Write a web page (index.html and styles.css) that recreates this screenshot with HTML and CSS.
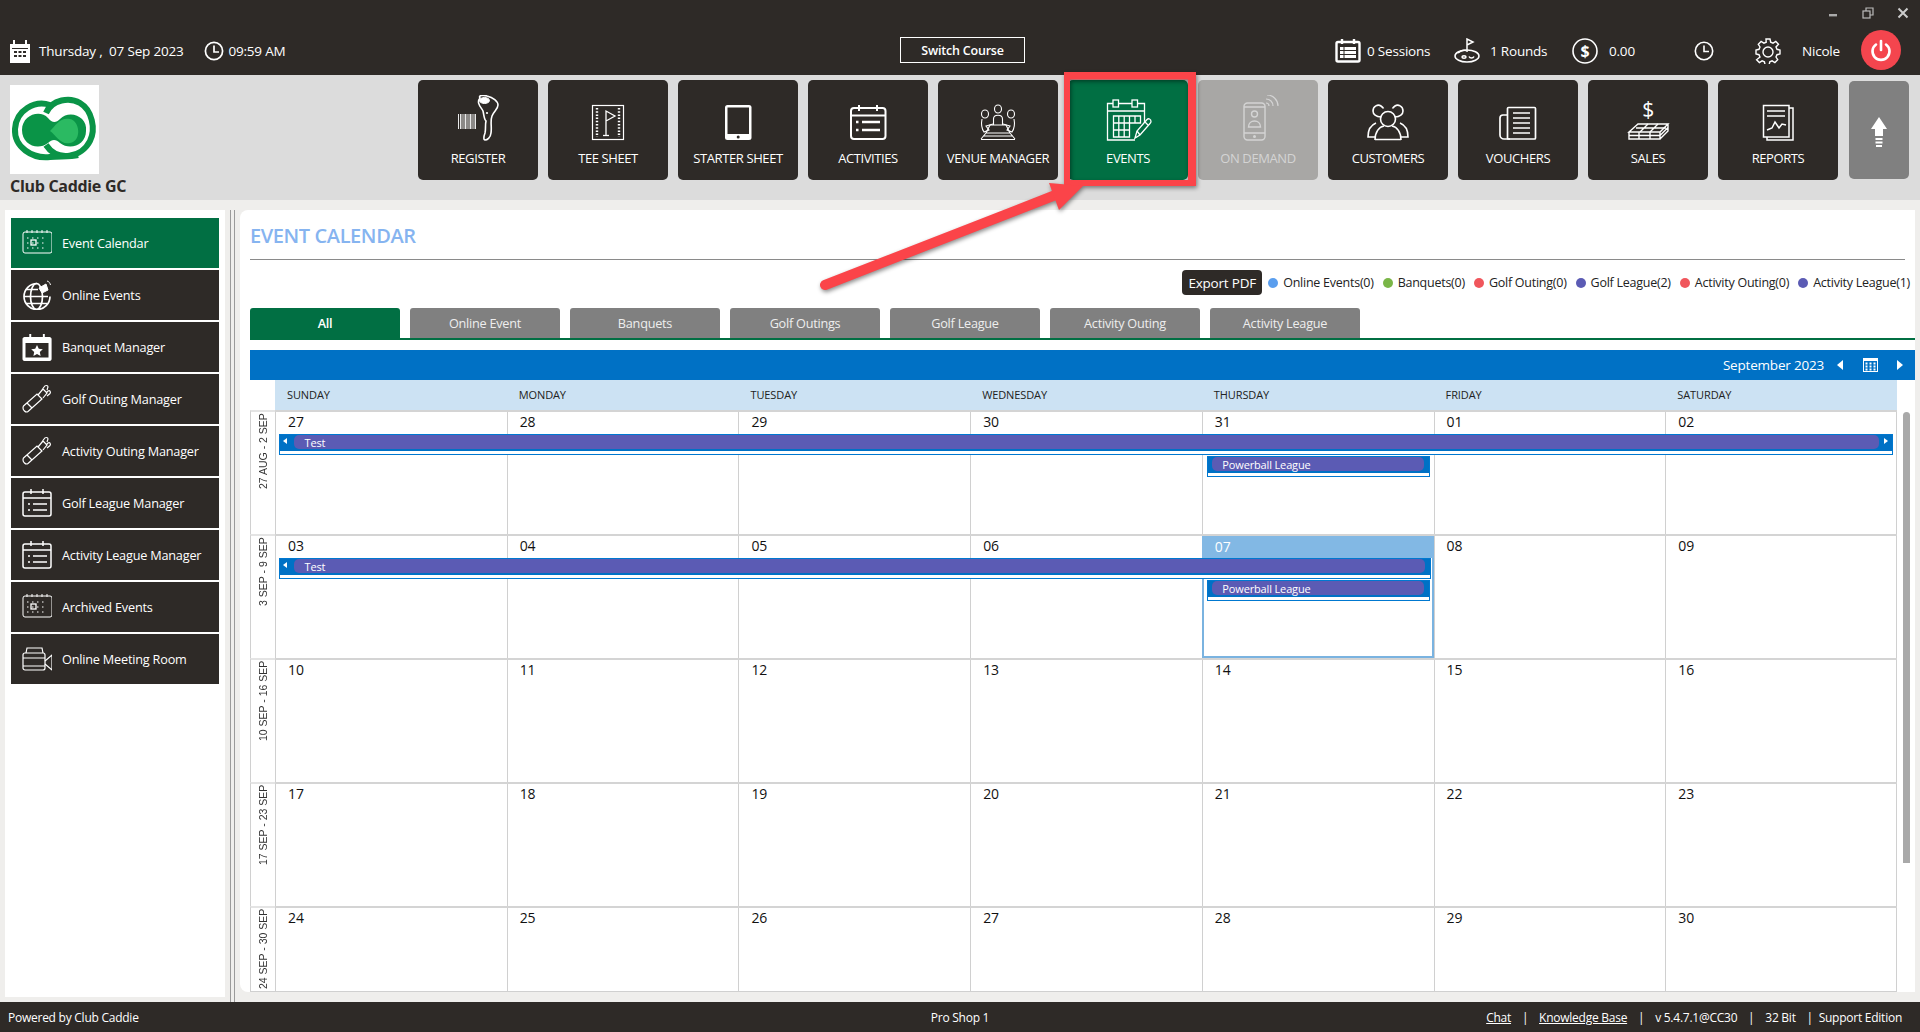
FILE: index.html
```html
<!DOCTYPE html>
<html lang="en">
<head>
  <meta charset="UTF-8">
  <title>Event Calendar</title>
  <link rel="stylesheet" href="styles.css">
</head>
<body>
<header class="topbar">
  <div class="winControls">
    <svg width="12" height="12" viewBox="0 0 12 12"><rect x="2" y="7" width="8" height="2.4" fill="#aaa"/></svg>
    <svg width="12" height="12" viewBox="0 0 12 12" fill="none" stroke="#bbb" stroke-width="1.2"><rect x="1" y="4" width="7" height="7"/><path d="M4 4V1h7v7H8"/></svg>
    <svg width="12" height="12" viewBox="0 0 12 12" stroke="#ccc" stroke-width="2"><path d="M1.5 1.5l9 9M10.5 1.5l-9 9"/></svg>
  </div>
  <div class="infoRow">
    <div class="infoLeft">
      <svg class="dateIcon" width="20" height="24" viewBox="0 0 20 24">
        <path d="M0 5h3V1h2v4h10V1h2v4h3v19H0z" fill="#fff"/>
        <path d="M3 1h2v6H3zM15 1h2v6h-2z" fill="#fff"/>
        <rect x="2" y="9" width="16" height="1" fill="#2e2a27"/>
        <path d="M4 12h3v2H4zM8.500 12h3v2h-3zM13 12h3v2h-3zM4 16h3v2H4zM8.500 16h3v2h-3zM13 16h3v2h-3z" fill="#2e2a27"/>
      </svg>
      <span class="dateText">Thursday ,&nbsp; 07 Sep 2023</span>
      <svg class="clockIcon" width="20" height="20" viewBox="0 0 20 20" fill="none" stroke="#fff" stroke-width="1.7"><circle cx="10" cy="10" r="8.600"/><path d="M10 4.500V11h5"/></svg>
      <span>09:59 AM</span>
    </div>
    <button class="switchBtn">Switch Course</button>
    <div class="infoRight">
      <svg width="26" height="24" viewBox="0 0 26 24" fill="none" stroke="#fff" stroke-width="2.400"><rect x="1.500" y="3" width="23" height="19.500" rx="1.500"/><path d="M7 0v5M19 0v5"/><path d="M5 9.500h16M5 13.500h16M5 17.500h16" stroke-width="2.800"/><path d="M9 8v11" stroke="#2e2a27" stroke-width="1"/></svg>
      <span class="statText sessions">0 Sessions</span>
      <svg width="26" height="25" viewBox="0 0 26 25" fill="none" stroke="#fff" stroke-width="1.500"><path d="M13 14V1l6 3-6 3"/><ellipse cx="13" cy="18" rx="12" ry="6"/><ellipse cx="10" cy="19" rx="2" ry="1.200"/><path d="M15 18.500c1 2 4 2 5 0"/><path d="M4 15c3-3 6-3 8-2.500" /></svg>
      <span class="statText rounds">1 Rounds</span>
      <svg width="26" height="26" viewBox="0 0 26 26" fill="none" stroke="#fff" stroke-width="1.600"><circle cx="13" cy="13" r="12"/><text x="13" y="18.500" text-anchor="middle" class="dollarGlyph">$</text></svg>
      <span class="statText amount">0.00</span>
      <svg class="histIcon" width="20" height="20" viewBox="0 0 20 20" fill="none" stroke="#fff" stroke-width="1.600"><circle cx="10" cy="10" r="8.700"/><path d="M10 4.500V10.500h5"/></svg>
      <svg class="gearIcon" width="26" height="26" viewBox="0 0 26 26" fill="none" stroke="#fff" stroke-width="1.400"><path d="M11 1h4l.7 3.200 2.300 1 2.800-1.700 2.700 2.800L21 9l1 2.300 3 .7v4l-3 .7-1 2.300 1.700 2.700-2.800 2.800-2.800-1.700-2.300 1-.7 3h-4l-.7-3-2.300-1-2.700 1.700-2.800-2.800L5 19l-1-2.300-3-.7v-4l3-.7L5 9 3.300 6.300l2.800-2.800L8.900 5.200l2.300-1z"/><circle cx="13" cy="14" r="5"/></svg>
      <span class="userName">Nicole</span>
      <div class="powerBtn">
        <svg width="24" height="24" viewBox="0 0 24 24" fill="none" stroke="#fff" stroke-width="2.600" stroke-linecap="round"><path d="M12 3v9"/><path d="M7 6.500a8.500 8.500 0 1 0 10 0"/></svg>
      </div>
    </div>
  </div>
</header>

<section class="toolbar">
  <div class="brand">
    <div class="brandLogo">
      <svg width="89" height="89" viewBox="0 0 89 89" fill="none">
        <path d="M36 28C42 14 60 12 70 18c12 7 16 26 10 38-8 16-32 22-44 4" stroke="#0a9447" stroke-width="6"/>
        <path d="M40 20C25 15 6 25 5 44c-1 18 17 30 35 28 10-1 20 0 28-2" stroke="#0a9447" stroke-width="6"/>
        <path d="M12 45c0-15 18-21 26-12 4 5 8 5 12 1 10-10 28-2 26 12 0 14-16 20-26 12-4-4-8-4-12 0-10 8-26 2-26-13z" fill="#0a9447"/>
        <path d="M40 46c6-6 10-14 20-12 10 2 12 22 0 24-10 2-14-8-20-12z" fill="#2bba62"/>
      </svg>
    </div>
    <div class="brandName">Club Caddie GC</div>
  </div>
  <nav class="tiles">
    <a class="tile">
      <svg class="tileIcon" viewBox="0 0 48 46" fill="none" stroke="#fff">
        <path d="M4.500 19v15M6.500 19v15M8 19v15M10 19v15M11.500 19v15M13 19v15M15 19v15M16.500 19v15M18 19v15M20 19v15M21.500 19v15" stroke-width=".9"/>
        <path d="M26 3c-2-3 4-3 7-2 6 1.500 11 5 11 9s-4 6-6 11c-2 5 0 11-1 17-.5 5-4 7-6 7-1.500 0-1.500-3 0-7 1-4 0-8 1-12-2-2-2-6-3-10-2-4-7-8-3-13z" stroke-width="1.600"/>
        <ellipse cx="30.500" cy="5.500" rx="5" ry="3" fill="#fff"/>
        <circle cx="33" cy="18" r="1.100" fill="#fff" stroke="none"/>
      </svg>
      <span>REGISTER</span>
    </a>
    <a class="tile">
      <svg class="tileIcon" viewBox="0 0 48 46" fill="none" stroke="#fff">
        <rect x="8.500" y="10.500" width="31" height="34" stroke-width="1.200"/>
        <path d="M13 13v29M35 13v29" stroke-width="2.400" stroke-dasharray="1.500 1.700"/>
        <path d="M22 40V16l9 5-9 5" stroke-width="1.300"/>
        <path d="M19 40.500h6" stroke-width="1.300"/>
      </svg>
      <span>TEE SHEET</span>
    </a>
    <a class="tile">
      <svg class="tileIcon" viewBox="0 0 48 46">
        <rect x="11" y="10" width="26.500" height="35" rx="2.500" fill="#fff"/>
        <rect x="13.500" y="12.500" width="21.500" height="26.500" fill="#2e2a27"/>
        <circle cx="24.200" cy="42" r="1.500" fill="#2e2a27"/>
      </svg>
      <span>STARTER SHEET</span>
    </a>
    <a class="tile">
      <svg class="tileIcon" viewBox="0 0 48 46" fill="none" stroke="#fff" stroke-width="2">
        <rect x="7" y="13" width="34.500" height="31" rx="3"/>
        <path d="M7 20.500h34.500M15 10v6M33 10v6"/>
        <path d="M12 27h2.500M18 27h18M12 35h2.500M18 35h18" stroke-width="2.400"/>
      </svg>
      <span>ACTIVITIES</span>
    </a>
    <a class="tile">
      <svg class="tileIcon" viewBox="0 0 48 46" fill="none" stroke="#fff" stroke-width="1.100">
        <ellipse cx="24" cy="14" rx="3.500" ry="4"/>
        <ellipse cx="11" cy="19" rx="3.500" ry="4"/>
        <ellipse cx="37" cy="19" rx="3.500" ry="4"/>
        <path d="M19.500 30v-6c0-5 9-5 9 0v6"/>
        <path d="M8 24c-1 5 0 10 2 13l5-2-3-4 7-2M40 24c1 5 0 10-2 13l-5-2 3-4-7-2"/>
        <path d="M16 30h16l4 8H12zM7 44l5-6M41 44l-5-6M7 44.500h34M9 41h30"/>
      </svg>
      <span>VENUE MANAGER</span>
    </a>
    <a class="tile active">
      <svg class="tileIcon" viewBox="0 0 48 46" fill="none" stroke="#fff" stroke-width="1.300">
        <path d="M31 45H3.500V8.500h37V28"/>
        <path d="M3.500 16h37"/>
        <rect x="9" y="5" width="5.500" height="7" fill="#016f43"/>
        <rect x="28" y="5" width="5.500" height="7" fill="#016f43"/>
        <path d="M9.500 21h27v7h-27zM9.500 28h16v14h-16zM9.500 35h16M14.800 21v21M20.200 21v21M25.500 21v7M31 21v7"/>
        <path d="M31 43l2-7 10-11.500c1.500-1.500 4-.5 4 2 0 1-.5 1.500-1 2L36 40z" fill="#016f43"/>
        <path d="M33 36l3 4M41 27l3 3"/>
      </svg>
      <span>EVENTS</span>
    </a>
    <a class="tile muted">
      <svg class="tileIcon" viewBox="0 0 48 46" fill="none" stroke="#d4d4d4" stroke-width="1.400">
        <rect x="10" y="8" width="21" height="37" rx="3.500"/>
        <path d="M10 38h21M10 12h21"/>
        <circle cx="20.500" cy="19" r="3"/>
        <path d="M14.500 32c0-8 12-8 12 0z"/>
        <circle cx="20.500" cy="41.500" r=".8"/>
        <path d="M32 4c4 0 7 3 7 7M33 0c6 0 11 5 11 11M32 8c2 0 3 1 3 3" stroke-width="1.200"/>
      </svg>
      <span>ON DEMAND</span>
    </a>
    <a class="tile">
      <svg class="tileIcon" viewBox="0 0 48 46" fill="none" stroke="#fff" stroke-width="1.600">
        <circle cx="24" cy="24" r="7.500"/>
        <path d="M17 22c-5 0-8-3-8-6 0-5 5-7 8-5 1 .7 2 1.500 2.500 2.500M31 22c5 0 8-3 8-6 0-5-5-7-8-5-1 .7-2 1.500-2.500 2.500"/>
        <path d="M11 45c0-8 4-13 9-14M37 45c0-8-4-13-9-14M11 44.500h26"/>
        <path d="M11 42H4c0-7 3-12 8-14M37 42h7c0-7-3-12-8-14"/>
      </svg>
      <span>CUSTOMERS</span>
    </a>
    <a class="tile">
      <svg class="tileIcon" viewBox="0 0 48 46" fill="none" stroke="#fff" stroke-width="1.700">
        <rect x="13.500" y="12.500" width="28" height="31.500" rx="1"/>
        <path d="M13.500 20H9c-2 0-3 1.500-3 3v17c0 2.500 2 4 4 4h6"/>
        <path d="M19 18h17M19 23h17M19 28h17M19 33h17M19 38h17" stroke-width="1.500"/>
      </svg>
      <span>VOUCHERS</span>
    </a>
    <a class="tile">
      <svg class="tileIcon" viewBox="0 0 48 46" fill="none" stroke="#fff" stroke-width="1.400">
        <text x="24" y="22" text-anchor="middle" class="salesGlyph">$</text>
        <path d="M14 29h30l-8 8H5zM5 37v7h31v-7M44 29v7l-8 8M5 40.500h31M44 32.500l-8 8"/>
        <path d="M24 29l-8 8M34 29l-8 8M15 37v7M26 37v7M12 33h30"/>
      </svg>
      <span>SALES</span>
    </a>
    <a class="tile">
      <svg class="tileIcon" viewBox="0 0 48 46" fill="none" stroke="#fff" stroke-width="1.500">
        <path d="M35 13h4v32H13v-3"/>
        <rect x="9.500" y="10.500" width="25.500" height="31.500"/>
        <path d="M13 16h18M13 21h18" stroke-width="1.500"/>
        <path d="M13 35l5-2 3-6 4 6 3-4 4 1"/>
      </svg>
      <span>REPORTS</span>
    </a>
    <a class="tile upTile">
      <svg width="18" height="32" viewBox="0 0 18 32" fill="#fff">
        <path d="M9 0l8 12h-4v7H5v-7H1z"/>
        <path d="M5.500 21h7v2h-7zM5.500 24.500h7v2h-7zM6 28h6v2H6z"/>
      </svg>
    </a>
  </nav>
</section>

<div class="workspace">
  <aside class="sidebar">
    <a class="sideItem active">
      <svg viewBox="0 0 30 30" fill="none" stroke="#fff"><rect x="1" y="4" width="29" height="21" rx="2" stroke-width="1"/><path d="M5 2v3M10 2v3M15 2v3M20 2v3M25 2v3" stroke-width="1"/><path d="M5 10h20M5 15h20M5 20h20" stroke-dasharray="1.500 3.500"/><rect x="9" y="12" width="5" height="5" stroke-width="1.300"/></svg>
      <span>Event Calendar</span>
    </a>
    <a class="sideItem">
      <svg viewBox="0 0 30 30" fill="none" stroke="#fff" stroke-width="1.700"><path d="M15 3.500a13 13 0 1 0 13 13"/><ellipse cx="14.500" cy="16.500" rx="6" ry="13"/><path d="M2 16.500h24M4 9.500h12M4 23.500h21"/><path d="M17 8l7-4 2 6-6 3z" fill="#fff" stroke-width="1"/><path d="M25 1c2 .5 3 2 3.500 4" stroke-width="1"/></svg>
      <span>Online Events</span>
    </a>
    <a class="sideItem">
      <svg viewBox="0 0 30 30"><path d="M2 5h5V2h2v3h12V2h2v3h5c1 0 2 1 2 2v20c0 1-1 2-2 2H2c-1 0-2-1-2-2V7c0-1 1-2 2-2z" fill="#fff" transform="translate(.5 0) scale(.97 1)"/><rect x="3.500" y="11" width="23" height="14.500" fill="#2e2a27"/><path d="M15 13l1.800 3.700 4 .5-3 2.700.8 4-3.600-2-3.600 2 .8-4-3-2.700 4-.5z" fill="#fff"/></svg>
      <span>Banquet Manager</span>
    </a>
    <a class="sideItem">
      <svg viewBox="0 0 30 30" fill="none" stroke="#fff" stroke-width="1.200"><path d="M1.500 22L15 10l5 5L6 27.500c-1.500 1-2.500.5-3.500-.5s-2-3-1-5z"/><path d="M5 19l5 5"/><path d="M16 11l5-6 4 4-4 5M20 6l2-3c1-2 4-2 4 0l-1 3M24 9l2-2c2-1 3 1 2 2.500L25 12"/></svg>
      <span>Golf Outing Manager</span>
    </a>
    <a class="sideItem">
      <svg viewBox="0 0 30 30" fill="none" stroke="#fff" stroke-width="1.200"><path d="M1.500 22L15 10l5 5L6 27.500c-1.500 1-2.500.5-3.500-.5s-2-3-1-5z"/><path d="M5 19l5 5"/><path d="M16 11l5-6 4 4-4 5M20 6l2-3c1-2 4-2 4 0l-1 3M24 9l2-2c2-1 3 1 2 2.500L25 12"/></svg>
      <span>Activity Outing Manager</span>
    </a>
    <a class="sideItem">
      <svg viewBox="0 0 30 30" fill="none" stroke="#fff" stroke-width="1.500"><rect x="1" y="4" width="28" height="24" rx="2"/><path d="M1 10h28M9 1v5M21 1v5"/><path d="M6 16h2M11 16h14M6 22h2M11 22h14" stroke-width="1.700"/></svg>
      <span>Golf League Manager</span>
    </a>
    <a class="sideItem">
      <svg viewBox="0 0 30 30" fill="none" stroke="#fff" stroke-width="1.500"><rect x="1" y="4" width="28" height="24" rx="2"/><path d="M1 10h28M9 1v5M21 1v5"/><path d="M6 16h2M11 16h14M6 22h2M11 22h14" stroke-width="1.700"/></svg>
      <span>Activity League Manager</span>
    </a>
    <a class="sideItem">
      <svg viewBox="0 0 30 30" fill="none" stroke="#fff"><rect x="1" y="4" width="29" height="21" rx="2" stroke-width="1"/><path d="M5 2v3M10 2v3M15 2v3M20 2v3M25 2v3" stroke-width="1"/><path d="M5 10h20M5 15h20M5 20h20" stroke-dasharray="1.500 3.500"/><rect x="9" y="12" width="5" height="5" stroke-width="1.300"/></svg>
      <span>Archived Events</span>
    </a>
    <a class="sideItem">
      <svg viewBox="0 0 30 30" fill="none" stroke="#fff" stroke-width="1.200"><rect x="1" y="9" width="22" height="17" rx="2"/><path d="M4 9l1-5h15l1 5M1 14h22M1 22h22"/><path d="M23 17l7-6v15l-7-6"/></svg>
      <span>Online Meeting Room</span>
    </a>
  </aside>
  <div class="splitter"></div>
  <main class="panel">
    <h2 class="panelTitle">EVENT CALENDAR</h2>
    <div class="legendRow">
      <button class="exportBtn">Export PDF</button>
      <span class="legend"><i class="dot blue"></i>Online Events(0)</span>
      <span class="legend"><i class="dot green"></i>Banquets(0)</span>
      <span class="legend"><i class="dot red"></i>Golf Outing(0)</span>
      <span class="legend"><i class="dot purple"></i>Golf League(2)</span>
      <span class="legend"><i class="dot red"></i>Activity Outing(0)</span>
      <span class="legend"><i class="dot purple"></i>Activity League(1)</span>
    </div>
    <div class="tabs">
      <a class="tab active">All</a>
      <a class="tab">Online Event</a>
      <a class="tab">Banquets</a>
      <a class="tab">Golf Outings</a>
      <a class="tab">Golf League</a>
      <a class="tab">Activity Outing</a>
      <a class="tab">Activity League</a>
    </div>
    <div class="calBar">
      <span>September 2023</span>
      <i class="tri left"></i>
      <svg width="15" height="14" viewBox="0 0 15 14"><rect width="15" height="14" fill="#fff"/><path d="M1 3h13v10H1z" fill="#0071c5"/><path d="M2.500 4.500h2v2h-2zM6.500 4.500h2v2h-2zM10.500 4.500h2v2h-2zM2.500 7.500h2v2h-2zM6.500 7.500h2v2h-2zM10.500 7.500h2v2h-2zM2.500 10.500h2v2h-2zM6.500 10.500h2v2h-2zM10.500 10.500h2v2h-2z" fill="#fff"/></svg>
      <i class="tri right"></i>
    </div>
    <div class="dayNames">
      <span>SUNDAY</span><span>MONDAY</span><span>TUESDAY</span><span>WEDNESDAY</span><span>THURSDAY</span><span>FRIDAY</span><span>SATURDAY</span>
    </div>
    <div class="calBody">
      <div class="weeks">
        <div class="week">
          <div class="weekLabel"><span>27 AUG - 2 SEP</span></div>
          <div class="weekGrid">
            <div class="day">27</div><div class="day">28</div><div class="day">29</div><div class="day">30</div><div class="day">31</div><div class="day">01</div><div class="day">02</div>
            <div class="event spanAll slot1"><div class="eventFill"><i class="tri left small"></i><div class="pill">Test</div><i class="tri right small"></i></div></div>
            <div class="event thu slot2"><div class="eventFill"><div class="pill">Powerball League</div></div></div>
          </div>
        </div>
        <div class="week">
          <div class="weekLabel"><span>3 SEP - 9 SEP</span></div>
          <div class="weekGrid">
            <div class="day">03</div><div class="day">04</div><div class="day">05</div><div class="day">06</div><div class="day today"><div class="todayNum">07</div></div><div class="day">08</div><div class="day">09</div>
            <div class="event spanFive slot1"><div class="eventFill"><i class="tri left small"></i><div class="pill">Test</div></div></div>
            <div class="event thu slot2"><div class="eventFill"><div class="pill">Powerball League</div></div></div>
          </div>
        </div>
        <div class="week">
          <div class="weekLabel"><span>10 SEP - 16 SEP</span></div>
          <div class="weekGrid">
            <div class="day">10</div><div class="day">11</div><div class="day">12</div><div class="day">13</div><div class="day">14</div><div class="day">15</div><div class="day">16</div>
          </div>
        </div>
        <div class="week">
          <div class="weekLabel"><span>17 SEP - 23 SEP</span></div>
          <div class="weekGrid">
            <div class="day">17</div><div class="day">18</div><div class="day">19</div><div class="day">20</div><div class="day">21</div><div class="day">22</div><div class="day">23</div>
          </div>
        </div>
        <div class="week last">
          <div class="weekLabel"><span>24 SEP - 30 SEP</span></div>
          <div class="weekGrid">
            <div class="day">24</div><div class="day">25</div><div class="day">26</div><div class="day">27</div><div class="day">28</div><div class="day">29</div><div class="day">30</div>
          </div>
        </div>
      </div>
      <div class="scrollGutter"><div class="scrollThumb"></div></div>
    </div>
  </main>
</div>

<footer class="footer">
  <span>Powered by Club Caddie</span>
  <span class="footCenter">Pro Shop 1</span>
  <div class="footRight">
    <a>Chat</a><b>|</b><a>Knowledge Base</a><b>|</b><span>v 5.4.7.1@CC30</span><b>|</b><span>32 Bit</span><b>|</b><span class="edition">Support Edition</span>
  </div>
</footer>

<!-- red callout drawn over the screenshot -->
<svg class="callout" width="1920" height="1032" viewBox="0 0 1920 1032" fill="#fb4449">
  <path fill-rule="evenodd" d="M1064 72h132v114h-132zM1070 79.500v100.500h118V79.500z"/>
  <path d="M825 285L1058 194" stroke="#fb4449" stroke-width="10" stroke-linecap="round"/>
  <path d="M1049 183L1083 186L1059 210z"/>
</svg>
</body>
</html>
```

FILE: styles.css
```css
* {
  box-sizing: border-box;
}

html, body {
  margin: 0;
  height: 100%;
}

body {
  display: flex;
  flex-direction: column;
  height: 1032px;
  overflow: hidden;
  background: #efeeec;
  font-family: "Open Sans", "Noto Sans", sans-serif;
  color: #222;
}

a {
  color: inherit;
}

/* top bar */
.topbar {
  height: 75px;
  background: #2e2a27;
  color: #fff;
}

.winControls {
  display: flex;
  justify-content: flex-end;
  gap: 23px;
  height: 26px;
  padding: 7px 11px 0 0;
}

.infoRow {
  display: flex;
  align-items: center;
  height: 49px;
  font-size: 13.5px;
  letter-spacing: -.2px;
}

.infoLeft {
  display: flex;
  align-items: center;
  width: 900px;
  padding-left: 10px;
}

.dateIcon {
  margin-right: 9px;
}

.clockIcon {
  margin: 0 4px 0 21px;
}

.switchBtn {
  width: 125px;
  height: 26px;
  margin-top: -1px;
  padding: 0;
  background: transparent;
  border: 1px solid #fff;
  color: #fff;
  font: 600 12.5px "Open Sans", sans-serif;
  letter-spacing: -.2px;
}

.infoRight {
  display: flex;
  align-items: center;
  margin-left: 310px;
}

.statText {
  margin-left: 6px;
}

.sessions {
  width: 87px;
}

.rounds {
  width: 82px;
  margin-left: 10px;
}

.amount {
  width: 85px;
  margin-left: 11px;
}

.histIcon {
  margin-right: 41px;
}

.userName {
  width: 59px;
  margin-left: 21px;
}

.powerBtn {
  display: flex;
  align-items: center;
  justify-content: center;
  width: 40px;
  height: 40px;
  margin-top: -1px;
  border-radius: 50%;
  background: #f4454e;
}

.dollarGlyph {
  font: 700 16px "Open Sans", sans-serif;
  fill: #fff;
  stroke: none;
}

/* toolbar */
.toolbar {
  display: flex;
  height: 125px;
  background: #dcdcdc;
  padding-top: 5px;
}

.brand {
  width: 418px;
  padding: 5px 0 0 10px;
}

.brandLogo {
  width: 89px;
  height: 89px;
  background: #fff;
}

.brandName {
  margin-top: 1px;
  font-size: 16px;
  font-weight: 700;
  letter-spacing: -.3px;
  color: #2e2a27;
}

.tiles {
  display: flex;
  gap: 10px;
  align-items: flex-start;
}

.tile {
  display: flex;
  flex-direction: column;
  align-items: center;
  width: 120px;
  height: 100px;
  padding-top: 15px;
  border-radius: 5px;
  background: #2e2a27;
  color: #fff;
  font-size: 13px;
  line-height: 16px;
  letter-spacing: -.4px;
}

.tile span {
  margin-top: 9px;
}

.tileIcon {
  width: 48px;
  height: 46px;
}

.tile.active {
  background: #016f43;
}

.tile.muted {
  background: #a8a7a5;
  color: #d4d4d4;
}

.upTile {
  width: 60px;
  height: 98px;
  margin: 1px 0 0 1px;
  padding-top: 36px;
  background: #808080;
}

.salesGlyph {
  font: 400 21px "Open Sans", sans-serif;
  fill: #fff;
  stroke: none;
}

/* sidebar + main */
.workspace {
  display: flex;
  height: 802px;
  padding-top: 10px;
}

.sidebar {
  display: flex;
  flex-direction: column;
  gap: 2px;
  width: 220px;
  height: 787px;
  margin-left: 5px;
  padding: 8px 6px;
  background: #fff;
}

.sideItem {
  display: flex;
  align-items: center;
  height: 50px;
  padding-left: 11px;
  background: #2e2a27;
  color: #fff;
  font-size: 12.7px;
  letter-spacing: -.2px;
}

.sideItem svg {
  width: 30px;
  height: 30px;
  margin-right: 10px;
}

.sideItem.active {
  background: #016f43;
}

.splitter {
  width: 5px;
  height: 792px;
  margin-left: 5px;
  border: 1px solid #9a9a9a;
  border-width: 0 1px;
}

.panel {
  width: 1675px;
  height: 782px;
  margin-left: 5px;
  padding-left: 10px;
  background: #fff;
  border-radius: 8px 0 0 8px;
}

.panelTitle {
  height: 50px;
  margin: 0 10px 0 0;
  padding-top: 11px;
  border-bottom: 1px solid #8a8a8a;
  font-size: 20px;
  font-weight: 600;
  line-height: 30px;
  letter-spacing: -.4px;
  color: #86b4f0;
}

.legendRow {
  display: flex;
  align-items: flex-start;
  justify-content: flex-end;
  gap: 9px;
  height: 48px;
  padding: 10px 5px 0 0;
  font-size: 12.5px;
  letter-spacing: -.25px;
}

.exportBtn {
  width: 80px;
  height: 25px;
  padding: 0;
  border: none;
  border-radius: 4px;
  background: #2e2a27;
  color: #fff;
  font: 13.5px "Open Sans", sans-serif;
  letter-spacing: -.2px;
}

.legend {
  display: flex;
  align-items: center;
  height: 25px;
  white-space: nowrap;
}

.exportBtn + .legend {
  margin-left: -3px;
}

.dot {
  width: 10px;
  height: 10px;
  margin-right: 5px;
  border-radius: 50%;
}

.dot.blue { background: #5a9eee; }
.dot.green { background: #7ab648; }
.dot.red { background: #f0565c; }
.dot.purple { background: #5b5bb4; }

.tabs {
  display: flex;
  gap: 10px;
  height: 32px;
  border-bottom: 2px solid #016f43;
}

.tab {
  width: 150px;
  height: 30px;
  border-radius: 3px 3px 0 0;
  background: #808080;
  color: #eee;
  font-size: 12.7px;
  line-height: 31px;
  letter-spacing: -.25px;
  text-align: center;
}

.tab.active {
  height: 32px;
  background: #016f43;
  color: #fff;
  font-weight: 600;
}

.calBar {
  display: flex;
  align-items: center;
  justify-content: flex-end;
  height: 30px;
  margin-top: 10px;
  padding-right: 12px;
  background: #0071c5;
  color: #fff;
  font-size: 13.5px;
  letter-spacing: -.2px;
}

.tri {
  width: 0;
  height: 0;
  border-style: solid;
  border-color: transparent;
}

.tri.left {
  margin: 0 20px 0 13px;
  border-width: 5px 6px 5px 0;
  border-right-color: #fff;
}

.tri.right {
  margin-left: 19px;
  border-width: 5px 0 5px 6px;
  border-left-color: #fff;
}

.dayNames {
  display: grid;
  grid-template-columns: repeat(7, minmax(0, 1fr));
  height: 30px;
  margin: 0 18px 0 25px;
  background: #cce2f3;
  font-size: 11px;
  line-height: 30px;
  letter-spacing: -.1px;
  color: #222;
}

.dayNames span {
  padding-left: 12px;
}

.calBody {
  display: flex;
  height: 582px;
}

.weeks {
  flex: 1;
  display: flex;
  flex-direction: column;
  min-width: 0;
  border-bottom: 1px solid #d0d0d0;
}

.week {
  display: flex;
  flex: none;
  height: 124px;
}

.week.last {
  flex: 1;
  height: auto;
  min-height: 0;
}

.weekLabel {
  flex: none;
  width: 25px;
  padding-top: 1px;
  border-left: 1px solid #d0d0d0;
  border-top: 2px solid #e4e4e4;
  font: 10.5px "Liberation Sans", Arial, sans-serif;
  color: #333;
  overflow: hidden;
}

.weekLabel span {
  display: block;
  height: 100%;
  padding-right: 6px;
  writing-mode: vertical-rl;
  transform: rotate(180deg);
  text-align: right;
  white-space: nowrap;
}

.weekGrid {
  flex: 1;
  min-width: 0;
  display: grid;
  grid-template-columns: repeat(7, minmax(0, 1fr));
  grid-template-rows: 22px 22px 22px 1fr;
  border-top: 2px solid #d4d4d4;
}

.day {
  grid-row: 1 / -1;
  padding-left: 12px;
  border-left: 1px solid #d0d0d0;
  font-size: 14px;
  line-height: 20px;
  letter-spacing: -.1px;
  color: #111;
}

.day:nth-child(1) { grid-column: 1; }
.day:nth-child(2) { grid-column: 2; }
.day:nth-child(3) { grid-column: 3; }
.day:nth-child(4) { grid-column: 4; }
.day:nth-child(5) { grid-column: 5; }
.day:nth-child(6) { grid-column: 6; }

.day:nth-child(7) {
  grid-column: 7;
  border-right: 1px solid #d0d0d0;
}

.day.today {
  padding: 0;
  border: 2px solid #7ab3e0;
  border-top: none;
}

.todayNum {
  height: 22px;
  margin: 0 -2px;
  padding: 1px 0 0 13px;
  background: #82b8e4;
  color: #fff;
}

.event {
  height: 21px;
  border: 1px solid #0078d0;
  background: #fff;
}

.slot1 { grid-row: 2; }
.slot2 { grid-row: 3; }

.spanAll {
  grid-column: 1 / -1;
  margin: 0 4px;
}

.spanFive {
  grid-column: 1 / 6;
  margin: 0 3px 0 4px;
}

.thu {
  grid-column: 5;
  margin: 0 4px 0 5px;
}

.eventFill {
  display: flex;
  align-items: flex-start;
  height: 16px;
  padding-right: 5px;
  padding-left: 4px;
  background: #0071c5;
}

.tri.small {
  margin: 3px 0 0 0;
  flex: none;
  border-width: 3.5px 4px 3.5px 0;
}

.tri.small.left {
  margin-right: 7px;
  margin-left: -1px;
  border-right-color: #fff;
}

.tri.small.right {
  margin-left: 5px;
  margin-right: -1px;
  border-width: 3.5px 0 3.5px 4px;
}

.pill {
  flex: 1;
  height: 14px;
  padding-left: 10.5px;
  border-radius: 5px;
  background: #5b5bb4;
  color: #fff;
  font-size: 11px;
  line-height: 15px;
  letter-spacing: -.15px;
}

.scrollGutter {
  width: 18px;
  padding: 2px 5px 0 6px;
}

.scrollThumb {
  width: 7px;
  height: 451px;
  border-radius: 4px 4px 0 0;
  background: #a9a9a9;
}

/* footer */
.footer {
  display: grid;
  grid-template-columns: 1fr auto 1fr;
  align-items: center;
  height: 30px;
  padding: 0 18px 0 8px;
  background: #2e2a27;
  color: #fff;
  font-size: 12px;
  letter-spacing: -.25px;
}

.footCenter {
  margin-left: 10px;
}

.footRight {
  display: flex;
  justify-content: flex-end;
  gap: 13.5px;
}

.footRight a {
  text-decoration: underline;
}

.footRight b {
  display: flex;
  justify-content: center;
  width: 1px;
  font-weight: 400;
}

.edition {
  margin-left: -5px;
}

/* annotation */
.callout {
  position: absolute;
  top: 0;
  left: 0;
  pointer-events: none;
  filter: drop-shadow(1px 2px 2px rgba(0, 0, 0, .45));
}
```
